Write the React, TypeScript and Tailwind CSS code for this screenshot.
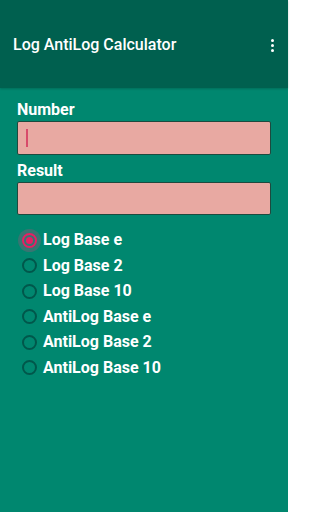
const options = [
  "Log Base e",
  "Log Base 2",
  "Log Base 10",
  "AntiLog Base e",
  "AntiLog Base 2",
  "AntiLog Base 10",
];

function Radio({ checked }: { checked: boolean }) {
  if (checked) {
    return (
      <span className="relative flex h-[15px] w-[15px] items-center justify-center">
        <span className="absolute -inset-[4px] rounded-full bg-[#e0407a]/25" />
        <span className="relative flex h-[15px] w-[15px] items-center justify-center rounded-full border-2 border-[#e91e63]">
          <span className="h-[7px] w-[7px] rounded-full bg-[#e91e63]" />
        </span>
      </span>
    );
  }
  return <span className="h-[15px] w-[15px] rounded-full border-2 border-[#00574b]" />;
}

export default function App() {
  return (
    <div
      className="flex h-[512px] w-[288px] flex-col bg-[#00876f]"
      style={{ fontFamily: "Roboto, 'Liberation Sans', sans-serif" }}
    >
      <header className="flex h-[88px] items-center justify-between bg-[#00604f] pl-[13px] pr-[14px] pt-[2px] shadow-[0_1px_2px_rgba(0,0,0,0.2)]">
        <h1 className="text-[16px] font-medium text-white">Log AntiLog Calculator</h1>
        <div className="flex flex-col gap-[2px]">
          <span className="h-[3px] w-[3px] rounded-full bg-white" />
          <span className="h-[3px] w-[3px] rounded-full bg-white" />
          <span className="h-[3px] w-[3px] rounded-full bg-white" />
        </div>
      </header>

      <main className="flex flex-col px-[17px] pt-[12px]">
        <label className="text-[16px] font-bold leading-[20px] text-white">Number</label>
        <div className="mt-[1px] flex h-[34px] w-[254px] items-center rounded-[2px] border border-[#1d4a3f] bg-[#e8a9a2] px-[8px]">
          <span className="h-[18px] w-[2px] bg-[#d84a6a]" />
        </div>
        <label className="mt-[6px] text-[16px] font-bold leading-[20px] text-white">Result</label>
        <div className="mt-[1px] h-[33px] w-[254px] rounded-[2px] border border-[#1d4a3f] bg-[#e8a9a2]" />

        <ul className="mt-[18px] flex flex-col gap-[11.5px] pl-[5px]">
          {options.map((o, i) => (
            <li key={o} className="flex h-[14px] items-center gap-[6px]">
              <Radio checked={i === 0} />
              <span className="text-[16px] font-bold text-white">{o}</span>
            </li>
          ))}
        </ul>
      </main>
    </div>
  );
}
